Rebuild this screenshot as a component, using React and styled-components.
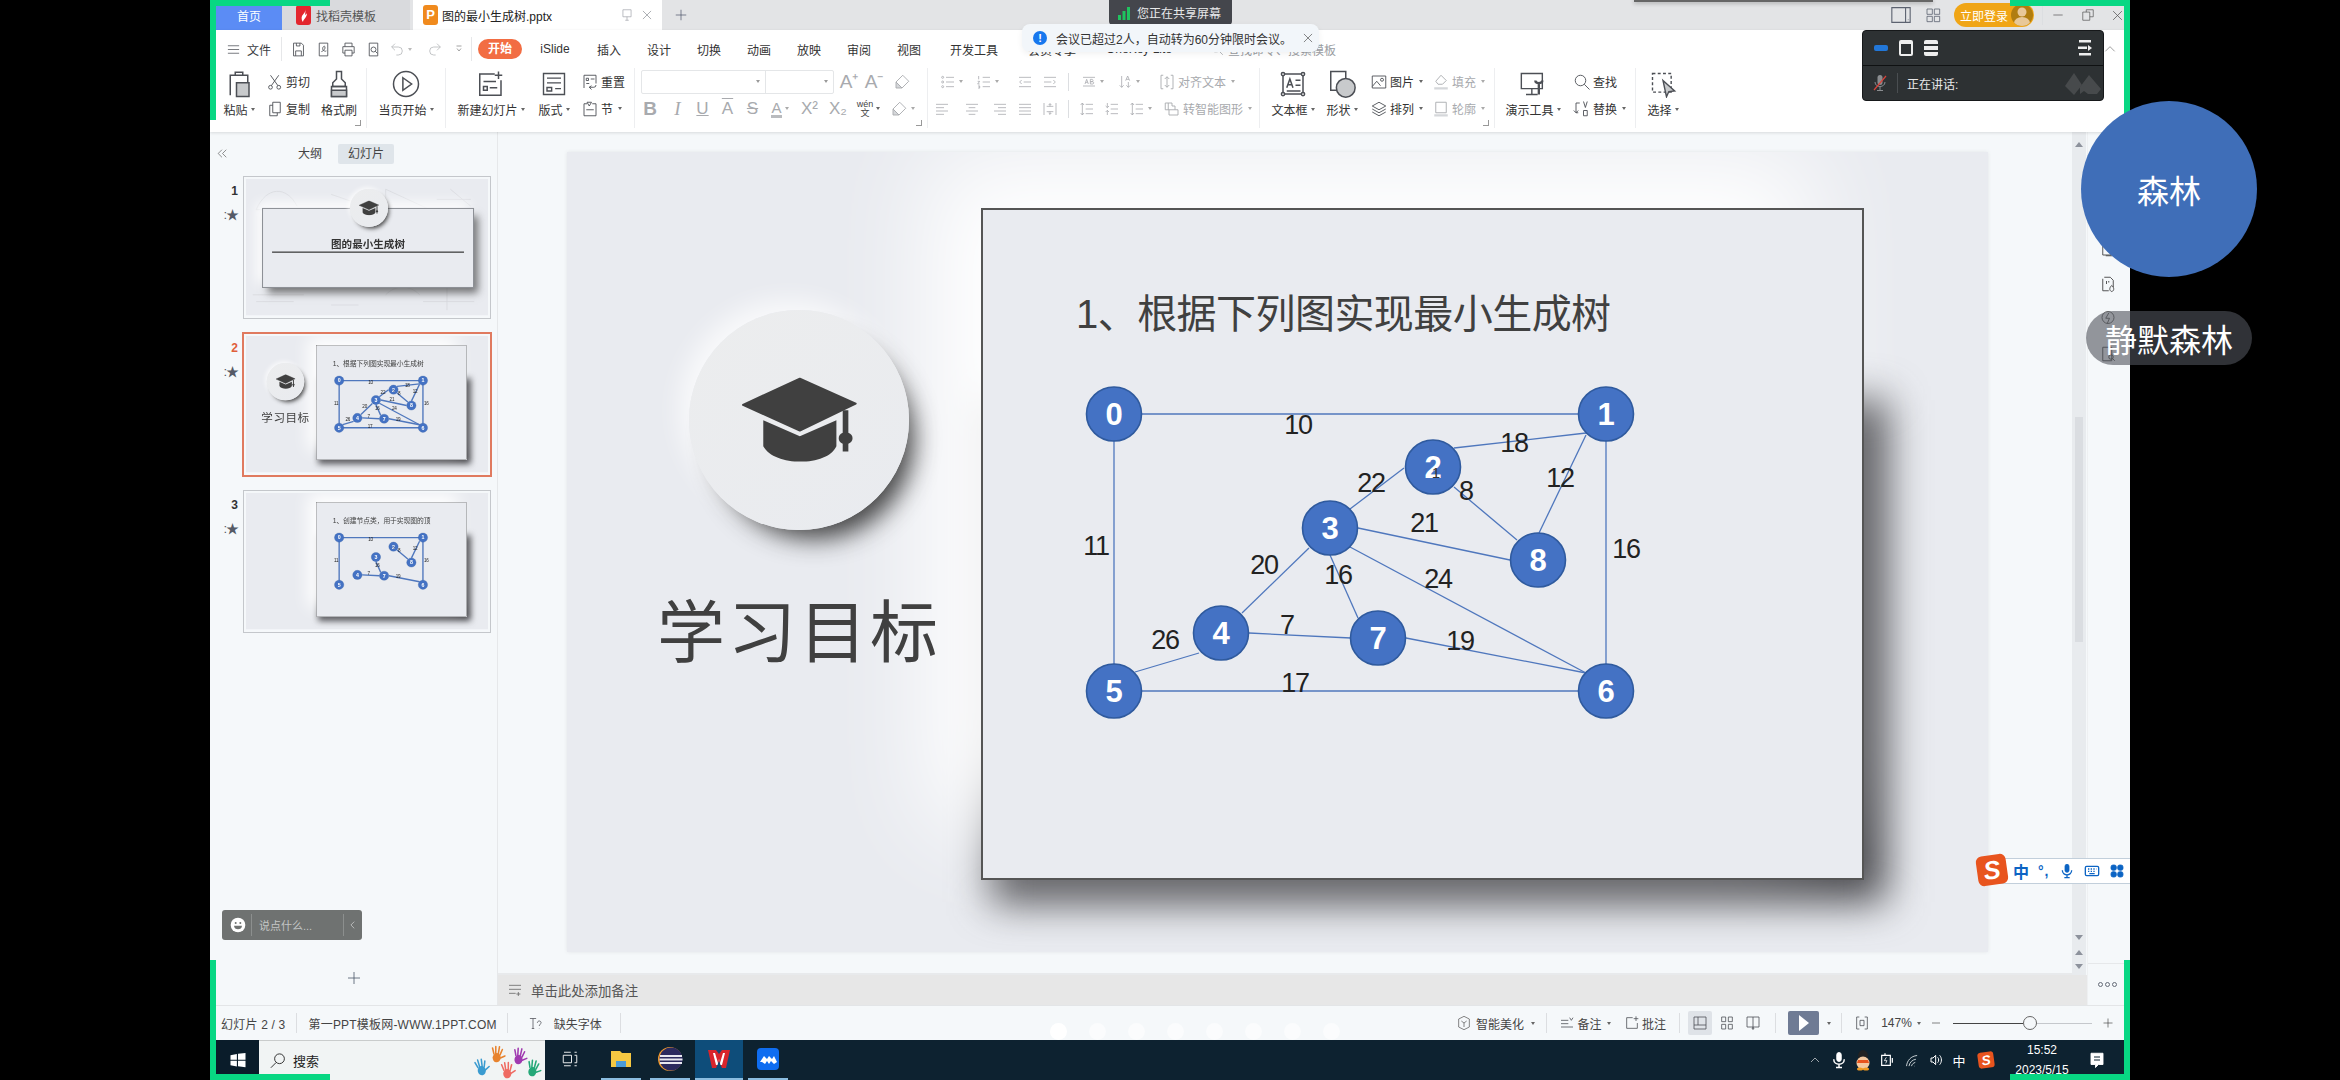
import React from "react";
import styled, { createGlobalStyle, css } from "styled-components";

const UI_FONT = `"Liberation Sans", "Noto Sans CJK SC", sans-serif`;
const GREEN = "#08d783";

const Global = createGlobalStyle`
  html, body {
    margin: 0;
    height: 100%;
    background: #000;
    overflow: hidden;
  }
  * { box-sizing: border-box; }
`;

const Screen = styled.div`
  width: 2340px;
  height: 1080px;
  background: #000;
  display: flex;
  justify-content: center;
  overflow: hidden;
  font-family: ${UI_FONT};
  font-size: 12px;
  color: #3a3d42;
`;

const Window = styled.div`
  position: relative;
  width: 1920px;
  height: 1080px;
  display: flex;
  flex-direction: column;
  background: #f5f8fa;
`;

/* ---------- icons ---------- */

const Ic = styled.svg.attrs({ viewBox: "0 0 24 24", fill: "none", stroke: "currentColor", strokeWidth: 1.2 })`
  width: ${(p) => p.$s || 18}px;
  height: ${(p) => p.$s || 18}px;
  color: ${(p) => p.$c || "#4c4f55"};
  flex-shrink: 0;
`;

const paths = {
  lines: <path d="M3 6h18M3 12h18M3 18h18" />,
  save: <><path d="M5 3h11l3 3v15H5z" /><path d="M8 21v-7h8v7M9 3v4h5V3" /></>,
  pdf: <><path d="M6 3h12v18H6z" /><path d="M9 15c3-1 6-4 5-7-1-2-4 1-3 4 1 2 4 3 5 2" /></>,
  print: <><path d="M7 8V3h10v5M7 17H4V8h16v9h-3" /><path d="M7 13h10v8H7z" /></>,
  preview: <><path d="M18 21H6V3h12z" /><circle cx="12" cy="12" r="3.5" /><path d="m14.5 14.5 3 3" /></>,
  undo: <><path d="M9 4 4 9l5 5" /><path d="M4 9h10a6 6 0 0 1 0 12h-3" /></>,
  redo: <><path d="m15 4 5 5-5 5" /><path d="M20 9H10a6 6 0 0 0 0 12h3" /></>,
  more: <path d="M7 6h10M8 11l4 5 4-5" />,
  paste: <><path d="M5 21V5h14v16" /><path d="M9 5V2.500h6V5" /><rect x="10" y="11" width="10" height="11" fill="#c8cacc" /></>,
  scissors: <><circle cx="6" cy="19" r="2.500" /><circle cx="17" cy="19" r="2.500" /><path d="M7 17 17 3M16 17 6 3" /></>,
  copy: <><path d="M9 3h10v14H9z" /><path d="M9 7H5v14h10v-4" /></>,
  brush: <><path d="M10 2h4v6l3 3v3H7v-3l3-3z" /><path d="M6 14h12v8H6z" /><path d="M6 17h12v5H6z" fill="#c8cacc" /></>,
  play: <><circle cx="12" cy="12" r="10" /><path d="m9.500 7 7 5-7 5z" /></>,
  newSlide: <><path d="M15 4H3v17h17V9" /><path d="M18 2v6M15 5h6M6 10h10M6 14h3v3H6zM11 15h6" /></>,
  layout: <><path d="M3 3h18v18H3z" /><path d="M6 7h12M6 11h12M6 15h4v3H6zM13 16h5" /></>,
  reset: <><path d="M4 20V3h16v11" /><path d="M7 7h3v3H7zM13 8h5M7 14h4" /><path d="M14 22l-3-3 3-2M11 19h6a3 3 0 0 0 3-3" /></>,
  section: <><path d="M8 5H4v16h16V5h-5" /><path d="m8 3 3 5 3-5zM7 13h10" /></>,
  eraser: <><path d="m13 3 8 8-9 9-8-8z" /><path d="m4 12 8 8H4z" fill="#d5d7da" /></>,
  bullets: <><circle cx="4" cy="5" r="1.500" /><circle cx="4" cy="12" r="1.500" /><circle cx="4" cy="19" r="1.500" /><path d="M9 5h12M9 12h12M9 19h12" /></>,
  numbers: <><path d="M4 3v5M2.500 11h3l-3 4h3M3 18h3l-1 1.500 1 1.500H3" /><path d="M10 5h11M10 12h11M10 19h11" /></>,
  indentL: <path d="M3 5h18M10 12h11M3 19h18M7 9l-3 3 3 3" />,
  indentR: <path d="M3 5h18M3 12h11M3 19h18M17 9l3 3-3 3" />,
  abLine: <><path d="M3 18h18M3 5h18" /><path d="M6 15l2.500-7L11 15M7 12.500h3M14 8h3a2 2 0 0 1 0 3.500h-3zm0 3.500h4a2 2 0 0 1 0 3.500h-4z" /></>,
  sortA: <path d="M7 3v17M4 17l3 3 3-3M13 10l3-7 3 7M14 8h4M17 20V12M14 17l3 3 3-3" />,
  alignBox: <><path d="M7 3H4v18h3M17 3h3v18h-3" /><path d="M12 5v14M9 8l3-3 3 3M9 16l3 3 3-3" /></>,
  alignL: <path d="M3 5h18M3 10h12M3 15h18M3 20h12" />,
  alignC: <path d="M3 5h18M7 10h10M3 15h18M7 20h10" />,
  alignR: <path d="M3 5h18M9 10h12M3 15h18M9 20h12" />,
  alignJ: <path d="M3 5h18M3 10h18M3 15h18M3 20h18" />,
  distrib: <><path d="M3 3v18M21 3v18M7 8h10M7 16h10" /><path d="M12 4v4M12 16v4M10 6l2-2 2 2M10 18l2 2 2-2" /></>,
  lineUp: <path d="M10 5h11M10 12h11M10 19h11M5 3v18M2.500 6 5 3l2.500 3M2.500 18 5 21l2.500-3" />,
  lineDown: <path d="M10 5h11M10 12h11M10 19h11M5 3v7M2.500 7.500 5 10l2.500-2.500M5 21v-7M2.500 16.500 5 14l2.500 2.500" />,
  smart: <><path d="M3 4h9v4h4v5H3z" /><path d="M7 4v9M8 13v7h12v-7h-4" /></>,
  textBox: <><path d="M4 4h16v16H4z" /><circle cx="4" cy="4" r="1.300" fill="#fff" /><circle cx="20" cy="4" r="1.300" fill="#fff" /><circle cx="4" cy="20" r="1.300" fill="#fff" /><circle cx="20" cy="20" r="1.300" fill="#fff" /><path d="m7 15 2.500-7 2.500 7M8 12.500h3M14 9h4M14 13h4M7 17.500h11" /></>,
  shape: <><path d="M3 2h12v15H3z" /><circle cx="15" cy="15" r="7.500" fill="#c8cacc" /></>,
  picture: <><path d="M3 4h18v16H3z" /><circle cx="16" cy="9" r="2" /><path d="m3 18 6-7 5 6" /></>,
  fill: <><path d="m12 3 7 7-5 5H8l-3-4z" /><path d="M3 19h18v3H3z" fill="#d5d7da" stroke="none" /></>,
  layers: <><path d="m12 3 9 5-9 5-9-5z" /><path d="m3 12 9 5 9-5M3 16l9 5 9-5" /></>,
  outline: <><path d="M5 3h14v14H5z" /><path d="M3 19h18v3H3z" fill="#d5d7da" stroke="none" /></>,
  present: <><path d="M2 3h18v13H2zM11 16v5M6 21h10" /><path d="M17 11v10M14 9c0 3 6 3 6 0" strokeWidth="2" /></>,
  search: <><circle cx="10" cy="10" r="7" /><path d="m15 15 7 7" /></>,
  replace: <><path d="M9 4H4v13h3M7 14l-3 3-3-3" /><path d="M14 2l2.500 8L19 2M14 14h5v7h-5z" /></>,
  select: <><path d="M3 3h16v16H3z" strokeDasharray="2.500 2" /><path d="m12 9 10 9-5 .5-2 4.500z" fill="#c8cacc" /></>,
  pin: <><path d="M5 3h14v12H5zM12 15v6M9 21h6" /></>,
  close: <path d="m5 5 14 14M19 5 5 19" />,
  minus: <path d="M4 12h16" />,
  restore: <><path d="M9 7V3h12v12h-6" /><path d="M3 7h12v14H3z" /></>,
  device: <><path d="M2 4h20v16H2z" /><path d="M17 4v16M19.500 17h.5" /></>,
  grid: <><path d="M3 3h8v8H3zM14 3h8v8h-8zM3 14h8v8H3zM14 14h8v8h-8z" /></>,
  chevronUp: <path d="m4 16 8-8 8 8" />,
  chevronLeft: <path d="m15 4-8 8 8 8" />,
  doubleLeft: <path d="m11 5-7 7 7 7M19 5l-7 7 7 7" />,
  beautify: <><path d="M12 2 4 6v12l8 4 8-4V6z" /><path d="m8 9 4 3 4-3M12 12v6" /></>,
  notes: <path d="M3 8h11M3 13h11M3 18h18M16 4l2.500 4L21 4" />,
  comment: <><path d="M13 4H4v16h16v-8" /><path d="M18 2v7M14.500 5.500h7" /></>,
  normalView: <><path d="M3 3h18v18H3z" /><path d="M9 3v12M3 15h18" /></>,
  sorter: <path d="M4 3h6v7H4zM14 3h6v7h-6zM4 14h6v7H4zM14 14h6v7h-6z" />,
  reading: <><path d="M3 3h18v15H3zM12 3v15" /><path d="m12 18-1.500 3h3z" /></>,
  fit: <><path d="M8 3H4v18h4M16 3h4v18h-4" /><path d="M9 8h6v8H9z" /></>,
  plus: <path d="M12 3v18M3 12h18" />,
  fontMissing: <><path d="M3 4h10M8 4v16M6 20h4" /><path d="M15 11c0-4 6-4 6 0 0 2-3 2-3 5M18 20v.5" /></>,
  notesAdd: <path d="M3 5h18M3 11h18M3 17h10M17 15v6M14 18h6" />,
  winSearch: <><circle cx="14" cy="9" r="6.500" /><path d="m9.500 14-7 7" /></>,
  taskView: <><path d="M3 7h11v10H3zM4 3h9M4 21h9M18 3h3M18 7h3v10h-3M18 21h3" /></>,
  mic: <><rect x="9" y="2" width="6" height="12" rx="3" fill="currentColor" /><path d="M5 11c0 9 14 9 14 0M12 18v4M8 22h8" strokeWidth="2" /></>,
  keyboard: <><rect x="2" y="5" width="20" height="14" rx="2" strokeWidth="2" /><path d="M6 9h2M10 9h2M14 9h2M18 9h.5M6 12.500h2M10 12.500h2M14 12.500h2M8 16h8" strokeWidth="2" /></>,
  apps: <><rect x="3" y="3" width="8" height="8" rx="3" fill="currentColor" /><rect x="13" y="3" width="8" height="8" rx="3" fill="currentColor" /><rect x="3" y="13" width="8" height="8" rx="3" fill="currentColor" /><rect x="13" y="13" width="8" height="8" rx="3" fill="currentColor" /></>,
  battery: <><path d="M4 5h13v15H4zM9 2v3M20 9v7" strokeWidth="1.800" /><path d="m11 8-3 5h4l-2 4" /></>,
  wifi: <path d="M4 21C5 12 11 5 21 4M8 21c1-6 5-10 11-11M12 21c.5-3 3-5 6-6M16 21h.5" strokeWidth="1.500" />,
  volume: <path d="M9 9H6v6h3l4 4V5zM16 8c2 2 2 6 0 8M19 5c3.500 4 3.500 10 0 14" strokeWidth="1.500" />,
  notify: <><path d="M4 3h16v15h-6l-4 4v-4H4z" fill="currentColor" /><path d="M8 8h8M8 12h8" stroke="#0d2230" strokeWidth="1.500" /></>,
  win4: <path d="M2 5.500 10.500 4v7.500H2zM12 3.800 22 2.500v9H12zM2 13h8.500v7.500L2 19zM12 13h10v8.500l-10-1.300z" fill="currentColor" stroke="none" />,
  sideA: <><path d="M5 4h11v16H5zM18 8v13H9" /></>,
  sideB: <><path d="M7 3h8l4 4v9M5 5v16h8" /><path d="M17 14c-3 2-4 7 0 8 4-1 3-6 0-8zM10 8v4M13 8v2" /></>,
  sideC: <><circle cx="12" cy="10" r="8" /><path d="m13 4-4 7h5l-3 7" /></>,
  sideD: <><path d="M5 3h12v18H5z" /><circle cx="16" cy="16" r="3" /><path d="m18 18 3 3" /></>,
  smile: <><circle cx="12" cy="12" r="11" fill="#fff" stroke="none" /><circle cx="8.500" cy="9" r="1.500" fill="#6f7271" stroke="none" /><circle cx="15.500" cy="9" r="1.500" fill="#6f7271" stroke="none" /><path d="M6 13h12c0 7-12 7-12 0z" fill="#6f7271" stroke="none" /></>,
};

const Icon = ({ n, ...rest }) => <Ic {...rest}>{paths[n]}</Ic>;

const Caret = styled.i`
  display: inline-block;
  width: 0;
  height: 0;
  margin-left: 3px;
  border-left: 2.5px solid transparent;
  border-right: 2.5px solid transparent;
  border-top: 3px solid ${(p) => p.$c || "#666"};
  flex-shrink: 0;
`;

/* ---------- tab bar ---------- */

const TabBar = styled.div`
  height: 30px;
  display: flex;
  align-items: stretch;
  background: #e3e4e6;
  flex-shrink: 0;
`;

const HomeTab = styled.div`
  width: 72px;
  padding-left: 6px;
  display: flex;
  align-items: center;
  justify-content: center;
  background: #5b8cf5;
  color: #fff;
`;

const TemplateTab = styled.div`
  width: 128px;
  margin-right: 3px;
  display: flex;
  align-items: center;
  gap: 5px;
  padding-left: 14px;
  background: #d9dadd;
  color: #555;
`;

const FileTab = styled.div`
  width: 249px;
  display: flex;
  align-items: center;
  gap: 4px;
  padding-left: 10px;
  background: #fff;
  color: #222;
`;

const TabLogo = styled.span`
  width: 15px;
  height: 20px;
  border-radius: 3px;
  background: ${(p) => p.$bg};
  color: #fff;
  font-size: 13px;
  font-weight: 700;
  line-height: 20px;
  text-align: center;
  flex-shrink: 0;
  display: block;
`;

const TabName = styled.span`
  flex: 1;
`;

const TabActions = styled.span`
  display: flex;
  gap: 6px;
  padding-right: 8px;
`;

const NewTab = styled.div`
  width: 38px;
  display: flex;
  align-items: center;
  justify-content: center;
`;

const WinControls = styled.div`
  margin-left: auto;
  display: flex;
  align-items: center;
`;

const WinBtn = styled.span`
  width: ${(p) => p.$w || 28}px;
  display: flex;
  justify-content: center;
`;

const LoginPill = styled.div`
  width: 80px;
  height: 24px;
  margin: 0 8px 0 12px;
  padding: 0 1px 0 6px;
  border-radius: 12px;
  background: #f0a516;
  color: #fff;
  display: flex;
  align-items: center;
  justify-content: space-between;
`;

const Avatar = styled.span`
  width: 22px;
  height: 22px;
  border-radius: 50%;
  overflow: hidden;
  display: block;
`;

const VSep = styled.span`
  width: 1px;
  height: ${(p) => p.$h || 18}px;
  margin: 0 ${(p) => p.$m ?? 4}px;
  background: ${(p) => p.$c || "#dcdee1"};
  flex-shrink: 0;
`;

/* ---------- toolbar ---------- */

const Toolbar = styled.div`
  height: 102px;
  flex-shrink: 0;
  background: #fff;
  box-shadow: 0 1px 3px rgba(0, 0, 0, 0.12);
  position: relative;
  z-index: 1;
`;

const MenuRow = styled.div`
  height: 38px;
  display: flex;
  align-items: center;
  padding-left: 6px;
`;

const FileMenu = styled.div`
  width: 65px;
  display: flex;
  align-items: center;
  gap: 6px;
  padding-left: 10px;
`;

const QuickBtn = styled.span`
  width: ${(p) => p.$w || 25}px;
  display: flex;
  align-items: center;
  justify-content: center;
`;

const StartPill = styled.div`
  width: 44px;
  height: 20px;
  margin-left: 3px;
  margin-right: 4px;
  border-radius: 10px;
  background: #f26d43;
  color: #fff;
  font-weight: 700;
  text-align: center;
  line-height: 20px;
`;

const MenuItem = styled.div`
  width: ${(p) => p.$w || 50}px;
  text-align: center;
  color: #333;
`;

const SearchCmd = styled.div`
  margin-left: 22px;
  display: flex;
  align-items: center;
  gap: 4px;
  color: #9a9da2;
`;

const CollapseBtn = styled.span`
  margin-left: auto;
  margin-right: 13px;
  display: flex;
`;

const Ribbon = styled.div`
  height: 60px;
  display: flex;
  padding-left: 6px;
`;

const Group = styled.div`
  position: relative;
  width: ${(p) => p.$w}px;
  display: flex;
  flex-shrink: 0;
  border-right: 1px solid #edeef0;
  ${(p) =>
    p.$launcher &&
    css`
      &::after {
        content: "";
        position: absolute;
        right: 5px;
        bottom: 2px;
        width: 5px;
        height: 5px;
        border-right: 1px solid #999;
        border-bottom: 1px solid #999;
      }
    `}
`;

const BigTool = styled.div`
  width: ${(p) => p.$w}px;
  display: flex;
  flex-direction: column;
  align-items: center;
  flex-shrink: 0;
`;

const BigIcon = styled.div`
  height: 32px;
  display: flex;
  align-items: center;
`;

const ToolLabel = styled.div`
  height: 18px;
  display: flex;
  align-items: center;
  white-space: nowrap;
  color: #333;
`;

const Stack = styled.div`
  width: ${(p) => p.$w}px;
  padding-left: ${(p) => p.$pad || 0}px;
  display: flex;
  flex-direction: column;
  flex-shrink: 0;
`;

const SmallTool = styled.div`
  height: 27px;
  display: flex;
  align-items: center;
  gap: 2px;
  white-space: nowrap;
  color: ${(p) => (p.$off ? "#a8aaae" : "#333")};
`;

const FontBox = styled.div`
  width: 193px;
  height: 24px;
  display: flex;
  border: 1px solid #e4e6e8;
  border-radius: 2px;
  flex-shrink: 0;
`;

const FontField = styled.div`
  width: ${(p) => p.$w}px;
  padding-right: 5px;
  display: flex;
  align-items: center;
  justify-content: flex-end;
  & + & {
    border-left: 1px solid #e4e6e8;
  }
`;

const Cell = styled.div`
  width: ${(p) => p.$w}px;
  height: 27px;
  display: flex;
  align-items: center;
  justify-content: center;
  flex-shrink: 0;
  color: #a8aaae;
`;

const Glyph = styled.span`
  font-size: ${(p) => p.$size || 15}px;
  font-weight: ${(p) => (p.$bold ? 700 : 400)};
  font-style: ${(p) => (p.$italic ? "italic" : "normal")};
  font-family: ${(p) => (p.$serif ? `"Liberation Serif", serif` : UI_FONT)};
  text-decoration: ${(p) => p.$deco || "none"};
  line-height: 1;
  color: #a8aaae;
`;

const ColorGlyph = styled(Glyph)`
  border-bottom: 3px solid #b9bbbe;
`;

const Phonetic = styled.span`
  display: flex;
  flex-direction: column;
  align-items: center;
  font-size: 9px;
  line-height: 9px;
  color: #444;
`;

const ParaRows = styled.div`
  display: flex;
  flex-direction: column;
`;

const Row = styled.div`
  display: flex;
  align-items: center;
`;

/* ---------- body ---------- */

const Body = styled.div`
  flex: 1;
  min-height: 0;
  display: flex;
`;

const LeftPanel = styled.div`
  width: 288px;
  padding-left: 6px;
  display: flex;
  flex-direction: column;
  border-right: 1px solid #e6e8ea;
  flex-shrink: 0;
`;

const PanelHead = styled.div`
  height: 45px;
  padding-top: 12px;
  display: flex;
  align-items: flex-start;
  position: relative;
`;

const BackBtn = styled.span`
  width: 13px;
  padding-top: 3px;
  display: flex;
  justify-content: center;
`;

const HeadTab = styled.div`
  width: 56px;
  height: 20px;
  margin-left: ${(p) => p.$ml || 0}px;
  border-radius: 2px;
  background: ${(p) => (p.$on ? "#dfe5ea" : "transparent")};
  color: #444;
  text-align: center;
  line-height: 20px;
`;

const ThumbList = styled.div`
  display: flex;
  flex-direction: column;
  gap: 16px;
`;

const ThumbRow = styled.div`
  display: flex;
  height: 141px;
`;

const ThumbMeta = styled.div`
  width: 28px;
  padding: 7px 6px 0 0;
  display: flex;
  flex-direction: column;
  align-items: flex-end;
  gap: 10px;
`;

const ThumbNum = styled.span`
  font-size: 12px;
  font-weight: 700;
  color: ${(p) => (p.$on ? "#e0603a" : "#333")};
`;

const Star = styled.span`
  font-size: 13px;
  line-height: 14px;
  color: #555b66;
  letter-spacing: -1px;
`;

const ThumbFrame = styled.div`
  width: 246px;
  height: 141px;
  padding: 2px;
  background: #f5f8fa;
  box-shadow: 0 0 0 ${(p) => (p.$on ? "2px #e07a5f" : "1px #c4c7cb")};
  overflow: hidden;
  flex-shrink: 0;
`;

const ThumbScale = styled.div`
  width: 1421px;
  height: 800px;
  transform: scale(0.1703);
  transform-origin: top left;
`;

const ChatBox = styled.div`
  margin: auto 0 0 6px;
  width: 140px;
  height: 30px;
  display: flex;
  align-items: center;
  border-radius: 3px;
  background: #6f7271;
  color: #c4c6c6;
  font-size: 11px;
  padding-left: 8px;
`;

const ChatText = styled.span`
  flex: 1;
  padding-left: 2px;
`;

const AddSlide = styled.div`
  height: 65px;
  padding: 30px 6px 0 0;
  display: flex;
  justify-content: center;
  align-items: flex-start;
`;

const Center = styled.div`
  width: 1589px;
  display: flex;
  flex-direction: column;
  flex-shrink: 0;
`;

const CanvasRow = styled.div`
  flex: 1;
  min-height: 0;
  display: flex;
`;

const Canvas = styled.div`
  width: 1574px;
  padding: 20px 84px 0 69px;
  border-bottom: 2px solid #e8eaec;
`;

const ScrollBar = styled.div`
  width: 14px;
  background: #e8ebee;
  display: flex;
  flex-direction: column;
  align-items: center;
  padding: 10px 0 6px;
`;

const ScrollThumb = styled.div`
  width: 8px;
  height: 225px;
  margin-top: 270px;
  margin-bottom: auto;
  background: #dadde1;
`;

const ScrollArrow = styled.i`
  display: block;
  width: 0;
  height: 0;
  margin-bottom: ${(p) => p.$mb || 0}px;
  border-left: 4px solid transparent;
  border-right: 4px solid transparent;
  ${(p) => (p.$up ? "border-bottom" : "border-top")}: 5px solid #8d929c;
`;

const NotesBar = styled.div`
  height: 30px;
  display: flex;
  align-items: center;
  gap: 8px;
  padding-left: 9px;
  background: #e7e7e7;
  font-size: 13.4px;
  color: #555;
`;

const SideBar = styled.div`
  flex: 1;
  display: flex;
  flex-direction: column;
  align-items: center;
  padding-top: 108px;
  border-left: 1px solid #eef0f2;
  padding-right: 3px;
`;

const SideIcons = styled.div`
  display: flex;
  flex-direction: column;
  gap: 17px;
`;

const SideMore = styled.div`
  margin-top: auto;
  width: 100%;
  height: 42px;
  display: flex;
  align-items: center;
  justify-content: center;
  gap: 2px;
  border-top: 1px solid #e6e8ea;
`;

const MoreDot = styled.i`
  width: 5px;
  height: 5px;
  border: 1px solid #666c78;
  border-radius: 50%;
`;

/* ---------- slides ---------- */

const Slide = styled.div`
  position: relative;
  isolation: isolate;
  width: 1421px;
  height: 800px;
  display: flex;
  background: #e9ebf0;
  box-shadow: 0 0 4px rgba(0, 0, 0, 0.08);
  overflow: hidden;
`;

const LeftCol = styled.div`
  position: relative;
  z-index: 2;
  width: 414px;
  padding: 158px 0 0 50px;
  display: flex;
  flex-direction: column;
  align-items: center;
  flex-shrink: 0;
`;

const Badge = styled.div`
  position: relative;
  z-index: 2;
  width: ${(p) => p.$d}px;
  height: ${(p) => p.$d}px;
  border-radius: 50%;
  background: linear-gradient(150deg, #ecedee 0%, #e9ebef 100%);
  box-shadow: 15px 19px 24px -10px rgba(40, 40, 40, 0.85), -10px -10px 24px rgba(255, 255, 255, 0.7);
  display: flex;
  align-items: center;
  justify-content: center;
  flex-shrink: 0;
`;

const Cap = ({ width }) => (
  <svg width={width} viewBox="420 282 352 258" fill="#404040">
    <path d="M597 287 765 362 597 443 426 366Z" stroke="#404040" strokeWidth="6" strokeLinejoin="round" />
    <path d="M487 412 597 460 707 412V490C680 552 520 552 487 490Z" />
    <path d="M726 382H743V450C760 455 760 478 743 483V506H726V483C710 478 710 455 726 450Z" />
  </svg>
);

const SlideTitle = styled.div`
  margin-top: 53px;
  font-size: 68px;
  letter-spacing: 3px;
  line-height: 90px;
  white-space: nowrap;
  color: #404040;
  font-family: "Noto Sans CJK SC", sans-serif;
`;

const GraphCard = styled.div`
  position: relative;
  width: 883px;
  height: 672px;
  margin: 56px 0 0 ${(p) => p.$ml || 0}px;
  background: #e9ebf0;
  border: 2px solid #555;
  box-shadow: -52px -52px 95px #fff;
  flex-shrink: 0;
  &::before {
    content: "";
    position: absolute;
    z-index: -1;
    top: 190px;
    left: 8px;
    right: -24px;
    bottom: -24px;
    background: rgba(60, 60, 64, 0.95);
    filter: blur(20px);
  }
`;

const CardHead = styled.div`
  height: 150px;
  padding: 79px 0 0 93px;
  font-size: 40px;
  line-height: 50px;
  color: #404040;
  letter-spacing: -0.55px;
  white-space: nowrap;
`;

const NODES = [
  [1114, 414], [1606, 414], [1433, 467], [1330, 528], [1221, 633],
  [1114, 691], [1606, 691], [1378, 638], [1538, 560],
];

/* each edge: the nodes it joins, then its drawn end points */
const EDGES = [
  ["0-1", 1114, 414, 1606, 414],
  ["0-5", 1114, 414, 1114, 691],
  ["1-6", 1606, 414, 1606, 691],
  ["5-6", 1114, 691, 1606, 691],
  ["1-2", 1454, 448, 1586, 433],
  ["1-8", 1539, 533, 1586, 435],
  ["2-8", 1454, 487, 1517, 540],
  ["2-3", 1350, 509, 1404, 468],
  ["3-8", 1358, 528, 1510, 560],
  ["3-4", 1309, 548, 1242, 613],
  ["3-7", 1330, 555, 1358, 618],
  ["3-6", 1350, 547, 1586, 673],
  ["4-5", 1199, 653, 1135, 672],
  ["4-7", 1249, 633, 1351, 638],
  ["7-6", 1406, 638, 1586, 673],
];

const TREE = ["0-1", "0-5", "1-6", "1-8", "2-8", "3-7", "4-7", "7-6"];

const ALL_LABELS = [
  ["10", 1298, 424], ["18", 1514, 442], ["22", 1371, 482], ["8", 1466, 490],
  ["12", 1560, 477], ["21", 1424, 522], ["11", 1096, 545], ["16", 1626, 548],
  ["20", 1264, 564], ["16", 1338, 574], ["24", 1438, 578], ["7", 1287, 624],
  ["26", 1165, 639], ["19", 1460, 640], ["17", 1295, 682],
];

const TREE_LABELS = [
  ["10", 1298, 424], ["8", 1466, 490], ["12", 1560, 477], ["11", 1096, 545],
  ["16", 1626, 548], ["16", 1338, 574], ["7", 1287, 624], ["19", 1460, 640],
];

const GraphSvg = styled.svg`
  display: block;
  font-family: "Liberation Sans", sans-serif;
`;

const Graph = ({ edges, labels, edgeWidth = 1.3 }) => (
  <GraphSvg width="879" height="518" viewBox="983 360 879 518">
    {edges.map(([id, x1, y1, x2, y2]) => (
      <line key={id} x1={x1} y1={y1} x2={x2} y2={y2} stroke="#4f77bd" strokeWidth={edgeWidth} />
    ))}
    {labels.map(([t, x, y]) => (
      <text key={`${t}-${x}`} x={x} y={y + 10} fontSize="27" letterSpacing="-1.2" textAnchor="middle" fill="#222">{t}</text>
    ))}
    {NODES.map(([x, y], i) => (
      <g key={i}>
        <ellipse cx={x} cy={y} rx="27.5" ry="27" fill="#4472c4" stroke="#2f5a9e" strokeWidth="1.6" />
        <text x={x} y={y + 11} fontSize="31" fontWeight="700" textAnchor="middle" fill="#fff">{i}</text>
      </g>
    ))}
    <text x="1436" y="478" fontSize="15" textAnchor="middle" fill="#333">1</text>
  </GraphSvg>
);

const TitleCard = styled.div`
  position: relative;
  z-index: 1;
  width: 1245px;
  height: 470px;
  margin: 170px 0 0 94px;
  background: #e9ebf0;
  border: 6px solid #8d9096;
  box-shadow: 30px 40px 46px -8px rgba(35, 35, 35, 0.6), -30px -30px 70px #fff;
  display: flex;
  flex-direction: column;
  align-items: center;
  padding-top: 160px;
`;

const TitleBadge = styled.div`
  position: absolute;
  top: -118px;
  left: 510px;
`;

const CoverTitle = styled.div`
  font-size: 62px;
  font-weight: 700;
  line-height: 80px;
  color: #333;
  font-family: "Noto Sans CJK SC", sans-serif;
`;

const CoverRule = styled.div`
  width: 1127px;
  height: 7px;
  margin-top: 10px;
  background: #333;
`;

const Sketch = styled.svg`
  position: absolute;
  inset: 0;
  opacity: 0.8;
`;

const CoverSlide = () => (
  <Slide>
    <Sketch viewBox="0 0 1421 800" fill="none" stroke="#d0d2d6" strokeWidth="4">
      <path d="M60 180C120 40 240 40 300 160M60 180h240M500 90l200 70M820 60l260 120-260 20zM1200 60l120 100M1120 120h200" />
      <path d="M40 680h300M60 720h220M500 740h160M820 680c60-60 140-60 200 0M1040 720h300M1180 640v130" />
    </Sketch>
    <TitleCard>
      <TitleBadge>
        <Badge $d={224}><Cap width={120} /></Badge>
      </TitleBadge>
      <CoverTitle>图的最小生成树</CoverTitle>
      <CoverRule />
    </TitleCard>
  </Slide>
);

const GoalSlide = ({ edgeWidth }) => (
  <Slide>
    <LeftCol>
      <Badge $d={220}><Cap width={117} /></Badge>
      <SlideTitle>学习目标</SlideTitle>
    </LeftCol>
    <GraphCard>
      <CardHead>1、根据下列图实现最小生成树</CardHead>
      <Graph edges={EDGES} labels={ALL_LABELS} edgeWidth={edgeWidth} />
    </GraphCard>
  </Slide>
);

const TreeSlide = () => (
  <Slide>
    <GraphCard $ml={414}>
      <CardHead>1、创建节点类，用于实现图的顶</CardHead>
      <Graph edges={EDGES.filter((e) => TREE.includes(e[0]))} labels={TREE_LABELS} edgeWidth={8} />
    </GraphCard>
  </Slide>
);

/* ---------- status bar ---------- */

const StatusBar = styled.div`
  height: 35px;
  flex-shrink: 0;
  display: flex;
  align-items: center;
  padding: 0 14px 0 11px;
  border-top: 1px solid #e3e5e7;
  color: #444;
  white-space: nowrap;
`;

const StatusText = styled.span`
  letter-spacing: 0.2px;
`;

const Dots = styled.div`
  align-self: flex-end;
  margin: 0 0 0 411px;
  display: flex;
  gap: 22px;
`;

const Dot = styled.i`
  width: 17px;
  height: 17px;
  border-radius: 50%;
  background: rgba(255, 255, 255, ${(p) => (p.$on ? 1 : 0.55)});
`;

const StatusRight = styled.div`
  margin-left: auto;
  display: flex;
  align-items: center;
`;

const StatusCell = styled.div`
  width: ${(p) => p.$w}px;
  margin-left: ${(p) => p.$ml || 0}px;
  display: flex;
  align-items: center;
  justify-content: center;
  gap: ${(p) => p.$gap || 2}px;
  flex-shrink: 0;
`;

const ViewBtn = styled.div`
  width: ${(p) => p.$w}px;
  height: 24px;
  margin-left: ${(p) => p.$ml || 0}px;
  border-radius: 2px;
  background: ${(p) => p.$bg};
  display: flex;
  align-items: center;
  justify-content: center;
  flex-shrink: 0;
`;

const PlayGlyph = styled.i`
  width: 0;
  height: 0;
  border-top: 8px solid transparent;
  border-bottom: 8px solid transparent;
  border-left: 10px solid #fff;
`;

const Slider = styled.div`
  width: 139px;
  margin-left: 11px;
  display: flex;
  align-items: center;
`;

const SliderFill = styled.i`
  width: 70px;
  height: 1px;
  background: #444;
`;

const SliderKnob = styled.i`
  width: 14px;
  height: 14px;
  border: 1px solid #666;
  border-radius: 50%;
  background: #f5f8fa;
`;

const SliderRest = styled.i`
  flex: 1;
  height: 1px;
  background: #c5c8cc;
`;

/* ---------- task bar ---------- */

const TaskBar = styled.div`
  height: 40px;
  flex-shrink: 0;
  display: flex;
  align-items: stretch;
  background: #0d2230;
  color: #fff;
`;

const StartBtn = styled.div`
  width: 49px;
  padding-left: 6px;
  display: flex;
  align-items: center;
  justify-content: center;
  background: #0a1c2a;
`;

const SearchBox = styled.div`
  width: 286px;
  display: flex;
  align-items: center;
  gap: 6px;
  padding-left: 10px;
  background: #f1f4f4;
  border-top: 1px solid #c9cccc;
  color: #222;
  font-size: 13px;
`;

const Hands = styled.svg`
  margin-left: auto;
`;

const TaskBtn = styled.div`
  width: ${(p) => p.$w}px;
  margin-left: ${(p) => p.$ml || 0}px;
  display: flex;
  align-items: center;
  justify-content: center;
  background: ${(p) => (p.$on ? "#0e4d7a" : "transparent")};
  border-bottom: 2px solid ${(p) => (p.$open ? "#8bbde0" : "transparent")};
  flex-shrink: 0;
`;

const Tray = styled.div`
  margin-left: auto;
  padding-right: 24px;
  display: flex;
  align-items: center;
`;

const TrayItem = styled.span`
  width: ${(p) => p.$w || 24}px;
  display: flex;
  justify-content: center;
  flex-shrink: 0;
`;

const TrayHan = styled.span`
  font-size: 13px;
  color: #fff;
`;

const Clock = styled.div`
  width: 72px;
  margin: 0 10px 0 5px;
  display: flex;
  flex-direction: column;
  align-items: center;
  line-height: 20px;
  color: #fff;
`;

const SogouTile = styled.span`
  display: flex;
  align-items: center;
  justify-content: center;
  width: ${(p) => p.$s}px;
  height: ${(p) => p.$s}px;
  border-radius: ${(p) => p.$s / 5}px;
  background: #e8541e;
  color: #fff;
  font-weight: 900;
  font-style: italic;
  font-size: ${(p) => p.$s * 0.85}px;
  transform: rotate(-8deg);
  flex-shrink: 0;
`;

const Hand = ({ x, y, r, c }) => (
  <g transform={`translate(${x} ${y}) rotate(${r}) scale(.62)`} stroke={c} fill={c} strokeLinecap="round">
    <ellipse cx="0" cy="6" rx="6.500" ry="7.500" stroke="none" />
    <path d="M-5 0-8-9M-2 0-3-12M2 0 3-12M5 1 8-8M6 6l7-4" strokeWidth="2.500" fill="none" />
  </g>
);

/* ---------- overlays ---------- */

const corners = {
  tl: css`top: 0; left: 0; border-width: 6px 0 0 6px;`,
  tr: css`top: 0; right: 0; border-width: 6px 6px 0 0;`,
  bl: css`bottom: 0; left: 0; border-width: 0 0 6px 6px;`,
  br: css`bottom: 0; right: 0; border-width: 0 6px 6px 0;`,
};

const ShareCorner = styled.div`
  position: absolute;
  z-index: 5;
  width: 120px;
  height: 120px;
  border-style: solid;
  border-color: ${GREEN};
  pointer-events: none;
  ${(p) => corners[p.$at]}
`;

const TopShadow = styled.div`
  position: absolute;
  z-index: 4;
  top: 0;
  left: 1424px;
  width: 299px;
  height: 2px;
  background: #666;
  box-shadow: 0 1px 4px rgba(0, 0, 0, 0.4);
`;

const ShareBadge = styled.div`
  position: absolute;
  z-index: 6;
  top: 0;
  left: 899px;
  width: 123px;
  height: 25px;
  border-radius: 0 0 4px 4px;
  background: #44464c;
  color: #e8e9ea;
  display: flex;
  align-items: center;
  gap: 6px;
  padding-left: 8px;
`;

const SignalBars = styled.svg`
  flex-shrink: 0;
`;

const Notice = styled.div`
  position: absolute;
  z-index: 6;
  top: 24px;
  left: 812px;
  width: 297px;
  height: 28px;
  border-radius: 8px;
  background: #f2f6fa;
  color: #333;
  display: flex;
  align-items: center;
  gap: 9px;
  padding: 0 10px 0 11px;
  box-shadow: 0 2px 6px rgba(0, 0, 0, 0.06);
  white-space: nowrap;
`;

const NoticeDot = styled.span`
  width: 14px;
  height: 14px;
  border-radius: 50%;
  background: #1677ee;
  color: #fff;
  font-size: 11px;
  font-weight: 700;
  line-height: 14px;
  text-align: center;
  flex-shrink: 0;
`;

const NoticeText = styled.span`
  flex: none;
`;

const MeetPanel = styled.div`
  position: absolute;
  z-index: 6;
  top: 30px;
  left: 1652px;
  width: 242px;
  height: 71px;
  border-radius: 4px;
  background: #2d3133;
  border: 1px solid #16181a;
  color: #e8e8e8;
`;

const MeetTop = styled.div`
  height: 35px;
  display: flex;
  align-items: center;
  gap: 11px;
  padding: 0 10px 0 11px;
  border-bottom: 1px solid #0f1112;
`;

const MeetBottom = styled.div`
  height: 34px;
  display: flex;
  align-items: center;
  padding-left: 9px;
`;

const BluePill = styled.i`
  width: 14px;
  height: 6px;
  border-radius: 2px;
  background: #2277d8;
`;

const WinGlyph = styled.i`
  width: 14px;
  height: 16px;
  border: 2px solid #eee;
  border-top-width: 4px;
  border-radius: 2px;
`;

const StackGlyph = styled.i`
  width: 14px;
  height: 16px;
  background: repeating-linear-gradient(#eee 0 4px, transparent 4px 6px);
  border-radius: 2px;
`;

const MeetMenu = styled.span`
  margin-left: auto;
  display: flex;
`;

const MeetLogo = styled.svg`
  margin-left: auto;
  margin-right: 1px;
`;

const FloatCircle = styled.div`
  position: absolute;
  z-index: 8;
  top: 101px;
  left: 1871px;
  width: 176px;
  height: 176px;
  border-radius: 50%;
  background: #3f6eb8;
  color: #fff;
  font-size: 32px;
  display: flex;
  align-items: center;
  justify-content: center;
`;

const NamePill = styled.div`
  position: absolute;
  z-index: 8;
  top: 311px;
  left: 1876px;
  width: 166px;
  height: 54px;
  border-radius: 27px;
  background: rgba(80, 83, 92, 0.6);
  color: #fff;
  font-size: 32px;
  display: flex;
  align-items: center;
  justify-content: center;
`;

const ImeBar = styled.div`
  position: absolute;
  z-index: 7;
  top: 858px;
  left: 1780px;
  width: 140px;
  height: 26px;
  background: #fff;
  border: 1px solid #c2cfdb;
  border-right: none;
  color: #0c64c4;
  display: flex;
  align-items: center;
  gap: 9px;
  padding-left: 22px;
`;

const ImeTile = styled.div`
  position: absolute;
  left: -14px;
  top: -4px;
`;

const ImeHan = styled.span`
  font-size: 16px;
  font-weight: 700;
`;

const ImePunct = styled.span`
  font-size: 14px;
  font-weight: 700;
  letter-spacing: 1px;
`;

const Penguin = () => (
  <svg width="16" height="22" viewBox="0 0 16 22">
    <ellipse cx="8" cy="7" rx="5" ry="6" fill="#222" />
    <ellipse cx="8" cy="14" rx="6.500" ry="6.500" fill="#f5c9a0" />
    <path d="M3 11h10l1 3H2z" fill="#e8541e" />
    <ellipse cx="5" cy="20" rx="3" ry="1.500" fill="#f09a20" />
    <ellipse cx="11" cy="20" rx="3" ry="1.500" fill="#f09a20" />
  </svg>
);

const Thumb = ({ n, on, children }) => (
  <ThumbRow>
    <ThumbMeta>
      <ThumbNum $on={on}>{n}</ThumbNum>
      <Star>:★</Star>
    </ThumbMeta>
    <ThumbFrame $on={on}>
      <ThumbScale>{children}</ThumbScale>
    </ThumbFrame>
  </ThumbRow>
);

const Small = ({ icon, label, caret, off, s = 18, c }) => (
  <SmallTool $off={off}>
    <Icon n={icon} $s={s} $c={c || (off ? "#a8aaae" : "#4c4f55")} />
    {label}
    {caret && <Caret $c={off ? "#aaa" : "#666"} />}
  </SmallTool>
);

const Big = ({ w, icon, s = 30, label, caret }) => (
  <BigTool $w={w}>
    <BigIcon><Icon n={icon} $s={s} /></BigIcon>
    <ToolLabel>{label}{caret && <Caret />}</ToolLabel>
  </BigTool>
);

const Off = ({ w, n, caret, s = 16 }) => (
  <Cell $w={w}>
    <Icon n={n} $s={s} $c="#a8aaae" />
    {caret && <Caret $c="#aaa" />}
  </Cell>
);

export default function App() {
  return (
    <Screen>
      <Global />
      <Window>
        <TabBar>
          <HomeTab>首页</HomeTab>
          <TemplateTab>
            <TabLogo $bg="#e3262e">
              <svg width="15" height="20" viewBox="0 0 15 20" fill="#fff">
                <path d="M9 3c1 4-1 5-3 8-1 2 0 5 1 6 0-3 4-4 4-9-.5 1-1 1.500-2 2 .5-2 .5-5 0-7z" />
              </svg>
            </TabLogo>
            找稻壳模板
          </TemplateTab>
          <FileTab>
            <TabLogo $bg="#f08a1d">P</TabLogo>
            <TabName>图的最小生成树.pptx</TabName>
            <TabActions>
              <Icon n="pin" $s={14} $c="#a0a4aa" />
              <Icon n="close" $s={14} $c="#8a8e94" />
            </TabActions>
          </FileTab>
          <NewTab><Icon n="plus" $s={14} $c="#4a5568" /></NewTab>
          <WinControls>
            <WinBtn $w={46}><Icon n="device" $s={22} $c="#5c6270" /></WinBtn>
            <WinBtn $w={18}><Icon n="grid" $s={16} $c="#5c6270" /></WinBtn>
            <LoginPill>
              立即登录
              <Avatar>
                <svg width="22" height="22" viewBox="0 0 22 22">
                  <rect width="22" height="22" fill="#b07d10" />
                  <circle cx="11" cy="8" r="4.500" fill="#e8c898" />
                  <ellipse cx="11" cy="19" rx="8" ry="6" fill="#e8c898" />
                </svg>
              </Avatar>
            </LoginPill>
            <VSep $m={0} $h={20} />
            <WinBtn $w={29}><Icon n="minus" $s={14} $c="#555" /></WinBtn>
            <WinBtn $w={32}><Icon n="restore" $s={14} $c="#555" /></WinBtn>
            <WinBtn $w={26}><Icon n="close" $s={15} $c="#555" /></WinBtn>
          </WinControls>
        </TabBar>

        <Toolbar>
          <MenuRow>
            <FileMenu>
              <Icon n="lines" $s={15} />
              文件
            </FileMenu>
            <VSep $m={0} $h={24} $c="#e6e7e9" />
            <QuickBtn $w={4} />
            <QuickBtn><Icon n="save" $s={17} /></QuickBtn>
            <QuickBtn><Icon n="pdf" $s={17} /></QuickBtn>
            <QuickBtn><Icon n="print" $s={17} /></QuickBtn>
            <QuickBtn><Icon n="preview" $s={17} /></QuickBtn>
            <QuickBtn $w={28}><Icon n="undo" $s={16} $c="#b5b7ba" /><Caret $c="#bbb" /></QuickBtn>
            <QuickBtn $w={8} />
            <QuickBtn><Icon n="redo" $s={16} $c="#b5b7ba" /></QuickBtn>
            <QuickBtn $w={24}><Icon n="more" $s={12} $c="#666" /></QuickBtn>
            <VSep $m={0} $h={24} $c="#e6e7e9" />
            <QuickBtn $w={3} />
            <StartPill>开始</StartPill>
            <MenuItem $w={58}>iSlide</MenuItem>
            <MenuItem>插入</MenuItem>
            <MenuItem>设计</MenuItem>
            <MenuItem>切换</MenuItem>
            <MenuItem>动画</MenuItem>
            <MenuItem>放映</MenuItem>
            <MenuItem>审阅</MenuItem>
            <MenuItem>视图</MenuItem>
            <MenuItem $w={80}>开发工具</MenuItem>
            <MenuItem $w={76}>会员专享</MenuItem>
            <MenuItem $w={98}>OneKey Lite</MenuItem>
            <SearchCmd>
              <Icon n="search" $s={14} $c="#9a9da2" />
              查找命令、搜索模板
            </SearchCmd>
            <CollapseBtn><Icon n="chevronUp" $s={14} $c="#777" /></CollapseBtn>
          </MenuRow>

          <Ribbon>
            <Group $w={151} $launcher>
              <Big w={46} icon="paste" label="粘贴" caret />
              <Stack $w={53} $pad={4}>
                <Small icon="scissors" label="剪切" />
                <Small icon="copy" label="复制" />
              </Stack>
              <Big w={48} icon="brush" label="格式刷" />
            </Group>
            <Group $w={79}>
              <Big w={78} icon="play" label="当页开始" caret />
            </Group>
            <Group $w={189}>
              <Big w={90} icon="newSlide" label="新建幻灯片" caret />
              <Big w={36} icon="layout" s={28} label="版式" caret />
              <Stack $w={62} $pad={9}>
                <Small icon="reset" label="重置" />
                <Small icon="section" label="节" caret />
              </Stack>
            </Group>
            <Group $w={293} $launcher>
              <ParaRows>
                <Row>
                  <Cell $w={6} />
                  <FontBox>
                    <FontField $w={124}><Caret $c="#999" /></FontField>
                    <FontField $w={69}><Caret $c="#999" /></FontField>
                  </FontBox>
                  <Cell $w={30}><Glyph $size={19}>A⁺</Glyph></Cell>
                  <Cell $w={20}><Glyph $size={19}>A⁻</Glyph></Cell>
                  <Off w={36} n="eraser" s={18} />
                </Row>
                <Row>
                  <Cell $w={30}><Glyph $bold $size={19}>B</Glyph></Cell>
                  <Cell $w={25}><Glyph $italic $serif $size={19}>I</Glyph></Cell>
                  <Cell $w={25}><Glyph $deco="underline" $size={17}>U</Glyph></Cell>
                  <Cell $w={25}><Glyph $size={17} $deco="overline">A</Glyph></Cell>
                  <Cell $w={25}><Glyph $size={17} $deco="line-through">S</Glyph></Cell>
                  <Cell $w={30}><ColorGlyph $size={15}>A</ColorGlyph><Caret $c="#aaa" /></Cell>
                  <Cell $w={29}><Glyph $size={17}>X²</Glyph></Cell>
                  <Cell $w={28}><Glyph $size={17}>X₂</Glyph></Cell>
                  <Cell $w={33}><Phonetic><span>wén</span><span>文</span></Phonetic><Caret /></Cell>
                  <Off w={35} n="eraser" s={18} caret />
                </Row>
              </ParaRows>
            </Group>
            <Group $w={332}>
              <ParaRows>
                <Row>
                  <Off w={46} n="bullets" caret />
                  <Off w={26} n="numbers" caret />
                  <Cell $w={12} />
                  <Off w={26} n="indentL" />
                  <Off w={24} n="indentR" />
                  <Cell $w={12}><VSep $m={0} $h={18} /></Cell>
                  <Off w={36} n="abLine" caret />
                  <Off w={36} n="sortA" caret />
                  <Cell $w={12} />
                  <Small icon="alignBox" label="对齐文本" caret off />
                </Row>
                <Row>
                  <Off w={28} n="alignL" />
                  <Off w={32} n="alignC" />
                  <Off w={24} n="alignR" />
                  <Off w={26} n="alignJ" />
                  <Off w={24} n="distrib" />
                  <Cell $w={12}><VSep $m={0} $h={18} /></Cell>
                  <Off w={25} n="lineUp" />
                  <Off w={25} n="lineDown" />
                  <Off w={32} n="lineUp" caret />
                  <Cell $w={7} />
                  <Small icon="smart" label="转智能图形" caret off />
                </Row>
              </ParaRows>
            </Group>
            <Group $w={235} $launcher>
              <Big w={66} icon="textBox" label="文本框" caret />
              <Big w={32} icon="shape" label="形状" caret />
              <Stack $w={72} $pad={12}>
                <Small icon="picture" label="图片" caret />
                <Small icon="layers" label="排列" caret />
              </Stack>
              <Stack $w={64} $pad={2}>
                <Small icon="fill" label="填充" caret off />
                <Small icon="outline" label="轮廓" caret off />
              </Stack>
            </Group>
            <Group $w={141}>
              <Big w={76} icon="present" s={28} label="演示工具" caret />
              <Stack $w={64} $pad={2}>
                <Small icon="search" label="查找" />
                <Small icon="replace" label="替换" caret />
              </Stack>
            </Group>
            <BigTool $w={54}>
              <BigIcon><Icon n="select" $s={28} /></BigIcon>
              <ToolLabel>选择<Caret /></ToolLabel>
            </BigTool>
          </Ribbon>
        </Toolbar>

        <Body>
          <LeftPanel>
            <PanelHead>
              <BackBtn><Icon n="doubleLeft" $s={13} $c="#555" /></BackBtn>
              <HeadTab $ml={53}>大纲</HeadTab>
              <HeadTab $on>幻灯片</HeadTab>
            </PanelHead>
            <ThumbList>
              <Thumb n={1}><CoverSlide /></Thumb>
              <Thumb n={2} on><GoalSlide edgeWidth={8} /></Thumb>
              <Thumb n={3}><TreeSlide /></Thumb>
            </ThumbList>
            <ChatBox>
              <Icon n="smile" $s={16} />
              <VSep $m={5} $h={22} $c="#8c8f8e" />
              <ChatText>说点什么...</ChatText>
              <VSep $m={0} $h={22} $c="#8c8f8e" />
              <QuickBtn $w={18}><Icon n="chevronLeft" $s={10} $c="#fff" /></QuickBtn>
            </ChatBox>
            <AddSlide><Icon n="plus" $s={16} $c="#4a5568" /></AddSlide>
          </LeftPanel>

          <Center>
            <CanvasRow>
              <Canvas>
                <GoalSlide />
              </Canvas>
              <ScrollBar>
                <ScrollArrow $up />
                <ScrollThumb />
                <ScrollArrow $mb={10} />
                <ScrollArrow $up $mb={9} />
                <ScrollArrow />
              </ScrollBar>
            </CanvasRow>
            <NotesBar>
              <Icon n="notesAdd" $s={16} $c="#666" />
              单击此处添加备注
            </NotesBar>
          </Center>

          <SideBar>
            <SideIcons>
              <Icon n="sideA" $s={18} $c="#444" />
              <Icon n="sideB" $s={18} $c="#444" />
              <Icon n="sideC" $s={18} $c="#555" />
              <Icon n="sideD" $s={18} $c="#444" />
            </SideIcons>
            <SideMore>
              <MoreDot />
              <MoreDot />
              <MoreDot />
            </SideMore>
          </SideBar>
        </Body>

        <StatusBar>
          <StatusText>幻灯片 2 / 3</StatusText>
          <VSep $m={11} $h={20} />
          <StatusText>第一PPT模板网-WWW.1PPT.COM</StatusText>
          <VSep $m={10} $h={20} />
          <StatusCell $w={36}><Icon n="fontMissing" $s={15} /></StatusCell>
          缺失字体
          <VSep $m={18} $h={20} />
          <Dots>
            <Dot $on />
            <Dot /><Dot /><Dot /><Dot /><Dot /><Dot /><Dot />
          </Dots>
          <StatusRight>
            <StatusCell $w={89} $gap={4}>
              <Icon n="beautify" $s={16} $c="#666" />
              智能美化
              <Caret />
            </StatusCell>
            <VSep $m={6} $h={20} />
            <StatusCell $w={64}>
              <Icon n="notes" $s={16} />
              备注
              <Caret />
            </StatusCell>
            <StatusCell $w={56}>
              <Icon n="comment" $s={16} />
              批注
            </StatusCell>
            <VSep $m={6} $h={20} />
            <ViewBtn $w={24} $ml={2} $bg="#dfe3e8"><Icon n="normalView" $s={16} /></ViewBtn>
            <StatusCell $w={26} $ml={2}><Icon n="sorter" $s={16} /></StatusCell>
            <StatusCell $w={26}><Icon n="reading" $s={16} /></StatusCell>
            <VSep $m={9} $h={20} />
            <ViewBtn $w={31} $ml={3} $bg="#6f7b94"><PlayGlyph /></ViewBtn>
            <StatusCell $w={16}><Caret /></StatusCell>
            <VSep $m={6} $h={20} />
            <StatusCell $w={24} $ml={2}><Icon n="fit" $s={16} /></StatusCell>
            <StatusCell $w={50} $ml={2}>147%<Caret /></StatusCell>
            <StatusCell $w={12} $ml={4}><Icon n="minus" $s={12} $c="#333" /></StatusCell>
            <Slider>
              <SliderFill />
              <SliderKnob />
              <SliderRest />
            </Slider>
            <StatusCell $w={16} $ml={8}><Icon n="plus" $s={12} $c="#333" /></StatusCell>
          </StatusRight>
        </StatusBar>

        <TaskBar>
          <StartBtn><Icon n="win4" $s={18} $c="#fff" /></StartBtn>
          <SearchBox>
            <Icon n="winSearch" $s={18} $c="#222" />
            搜索
            <Hands width="72" height="38" viewBox="0 0 72 38">
              <Hand x={8} y={25} r={-12} c="#3a9bd0" />
              <Hand x={24} y={12} r={5} c="#e8832e" />
              <Hand x={34} y={28} r={-4} c="#ef6b63" />
              <Hand x={46} y={14} r={8} c="#a03ab0" />
              <Hand x={60} y={26} r={10} c="#25a878" />
            </Hands>
          </SearchBox>
          <TaskBtn $w={40} $ml={5}><Icon n="taskView" $s={18} $c="#fff" /></TaskBtn>
          <TaskBtn $w={40} $ml={11} $open>
            <svg width="24" height="24" viewBox="0 0 24 24">
              <path d="M2 4h9l2 2h9v14H2z" fill="#f5c842" />
              <path d="M7 20v-6h10v6z" fill="#4a9bd8" />
            </svg>
          </TaskBtn>
          <TaskBtn $w={40} $ml={9} $open>
            <svg width="26" height="26" viewBox="0 0 26 26">
              <circle cx="13" cy="13" r="12" fill="#f09a30" />
              <circle cx="14" cy="13" r="11.500" fill="#2c2a5e" />
              <path d="M3 10h22M2.500 13.500h23M3 17h22" stroke="#e8e8f0" strokeWidth="1.800" />
            </svg>
          </TaskBtn>
          <TaskBtn $w={48} $ml={5} $on $open>
            <svg width="24" height="24" viewBox="0 0 24 24">
              <path d="M1 3h8l3 4 3-4h8l-4 18h-4l-3-7-3 7H5z" fill="#d9252c" />
              <path d="M6 6h2l3 10 1-3 1 3 3-10h2l-3 12h-1.500L12 12l-1.500 6H9z" fill="#fff" />
            </svg>
          </TaskBtn>
          <TaskBtn $w={40} $ml={5} $open>
            <svg width="24" height="24" viewBox="0 0 24 24">
              <rect x="1" y="1" width="22" height="22" rx="4" fill="#0f6df0" />
              <path d="M4 15 8 9l3 3 2-3 3 3 2-3 3 6-3 2-3-3-2 3-2-3-2 3-3-2z" fill="#fff" />
            </svg>
          </TaskBtn>
          <Tray>
            <TrayItem><Icon n="chevronUp" $s={12} $c="#fff" /></TrayItem>
            <TrayItem><Icon n="mic" $s={18} $c="#fff" /></TrayItem>
            <TrayItem><Penguin /></TrayItem>
            <TrayItem><Icon n="battery" $s={16} $c="#fff" /></TrayItem>
            <TrayItem><Icon n="wifi" $s={15} $c="#cfd6da" /></TrayItem>
            <TrayItem><Icon n="volume" $s={16} $c="#fff" /></TrayItem>
            <TrayItem><TrayHan>中</TrayHan></TrayItem>
            <TrayItem $w={30}><SogouTile $s={16}>S</SogouTile></TrayItem>
            <Clock>
              <span>15:52</span>
              <span>2023/5/15</span>
            </Clock>
            <TrayItem $w={18}><Icon n="notify" $s={18} $c="#fff" /></TrayItem>
          </Tray>
        </TaskBar>

        <ShareCorner $at="tl" />
        <ShareCorner $at="tr" />
        <ShareCorner $at="bl" />
        <ShareCorner $at="br" />
        <TopShadow />

        <ShareBadge>
          <SignalBars width="14" height="14" viewBox="0 0 14 14" fill="#1fc45f">
            <rect x="1" y="9" width="3" height="5" />
            <rect x="5.500" y="5" width="3" height="9" />
            <rect x="10" y="1" width="3" height="13" />
          </SignalBars>
          您正在共享屏幕
        </ShareBadge>

        <Notice>
          <NoticeDot>!</NoticeDot>
          <NoticeText>会议已超过2人，自动转为60分钟限时会议。</NoticeText>
          <Icon n="close" $s={14} $c="#555" />
        </Notice>

        <MeetPanel>
          <MeetTop>
            <BluePill />
            <WinGlyph />
            <StackGlyph />
            <MeetMenu>
              <svg width="16" height="18" viewBox="0 0 16 18" fill="#eee">
                <rect x="2" y="1" width="12" height="2.500" />
                <rect x="1" y="7.500" width="9" height="2.500" />
                <rect x="2" y="14" width="12" height="2.500" />
                <path d="m11 6 4 3-4 3z" />
              </svg>
            </MeetMenu>
          </MeetTop>
          <MeetBottom>
            <svg width="16" height="18" viewBox="0 0 16 18">
              <rect x="5.500" y="1" width="5" height="10" rx="2.500" fill="#8a8d90" />
              <path d="M3 8c0 6 10 6 10 0M8 13v3M5 16.500h6" stroke="#8a8d90" fill="none" />
              <path d="m2 16 12-14" stroke="#d9443c" strokeWidth="1.200" />
            </svg>
            <VSep $m={9} $h={20} $c="#4a4e51" />
            正在讲话:
            <MeetLogo width="38" height="26" viewBox="0 0 38 26" fill="#474a4c">
              <path d="M1 16 10 3l8 12-8 10z" />
              <path d="m16 17 9-12 12 14-4 5h-9l-4-3-4 3z" />
            </MeetLogo>
          </MeetBottom>
        </MeetPanel>

        <FloatCircle>森林</FloatCircle>
        <NamePill>静默森林</NamePill>

        <ImeBar>
          <ImeTile><SogouTile $s={30}>S</SogouTile></ImeTile>
          <ImeHan>中</ImeHan>
          <ImePunct>°,</ImePunct>
          <Icon n="mic" $s={16} $c="#0c64c4" />
          <Icon n="keyboard" $s={16} $c="#0c64c4" />
          <Icon n="apps" $s={16} $c="#0c64c4" />
        </ImeBar>
      </Window>
    </Screen>
  );
}
